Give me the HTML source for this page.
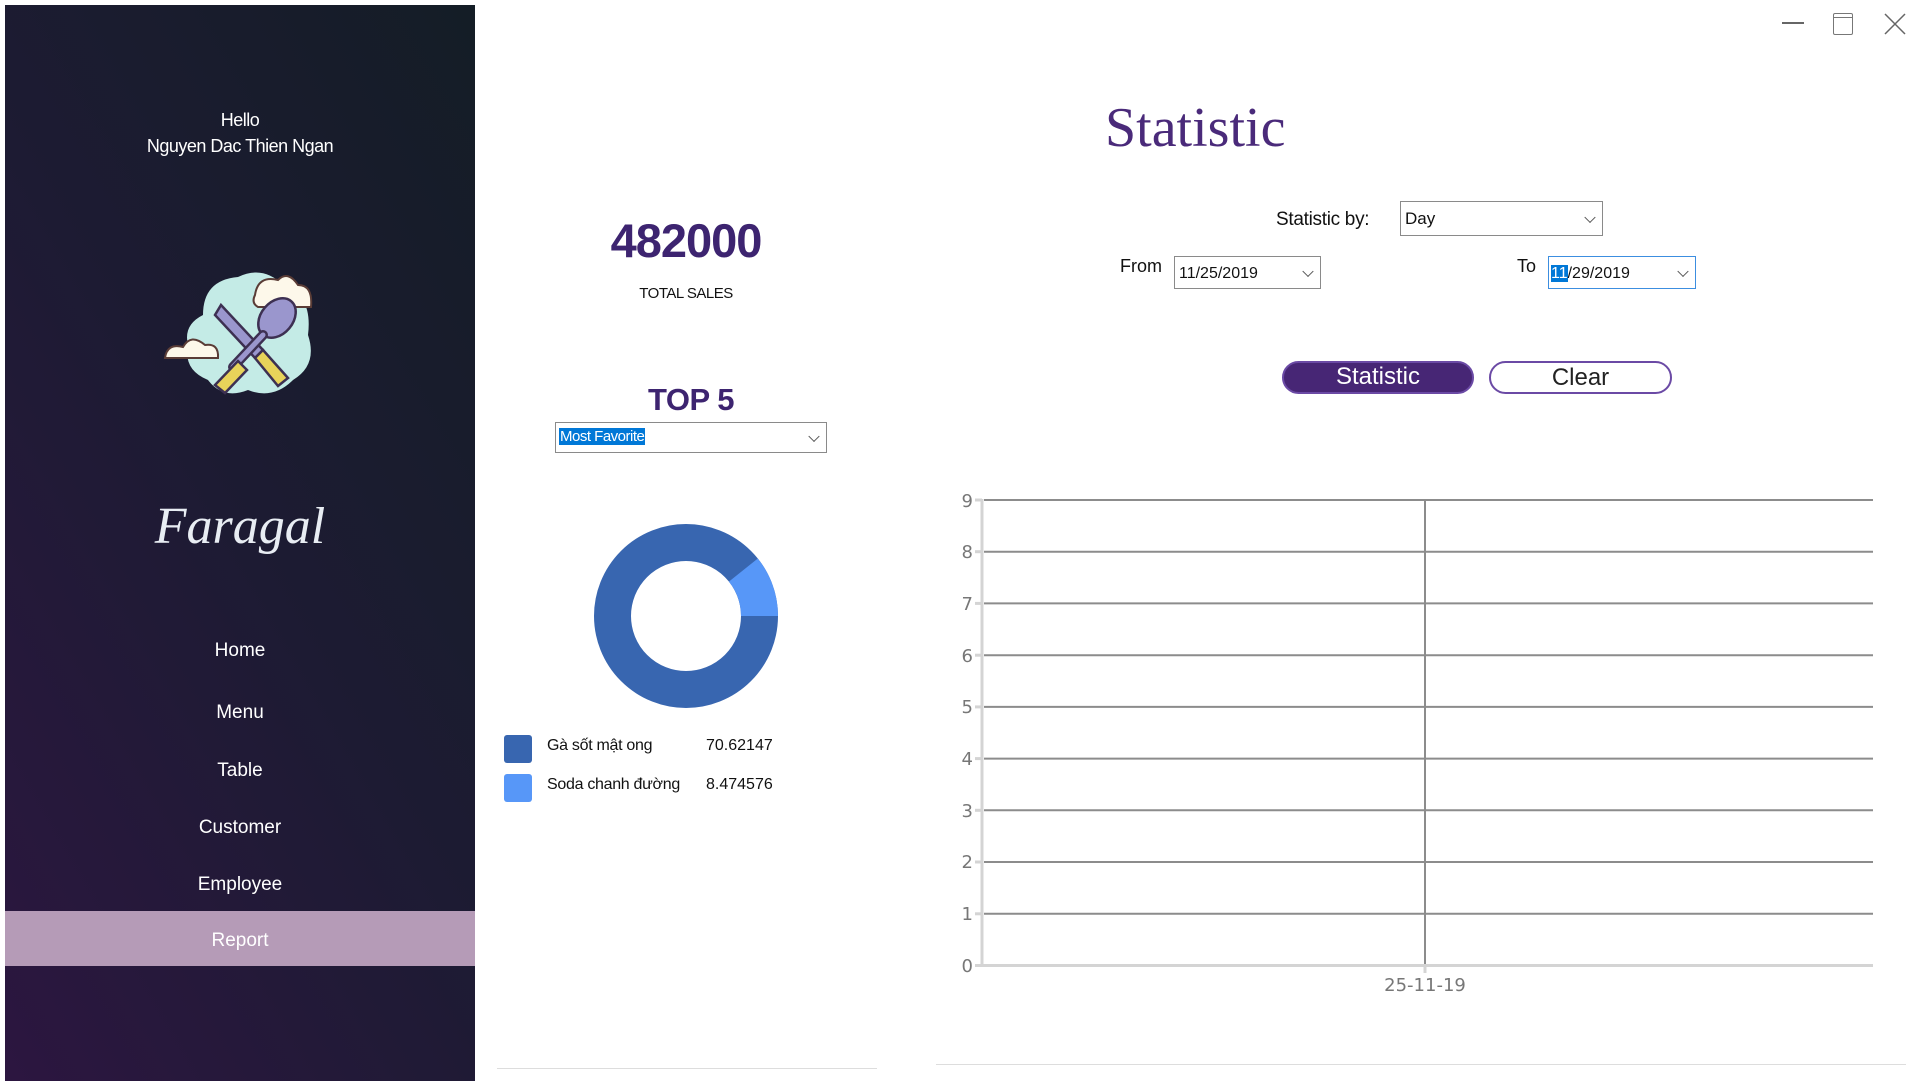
<!DOCTYPE html>
<html><head><meta charset="utf-8"><style>
*{margin:0;padding:0;box-sizing:border-box}
body{width:1920px;height:1080px;background:#fff;position:relative;overflow:hidden;font-family:"Liberation Sans","DejaVu Sans",sans-serif;color:#111}
.a{position:absolute}
#side{left:5px;top:5px;width:470px;height:1076px;background:linear-gradient(60deg,#2c1640 0%,#1d1b33 50%,#141d26 100%)}
.c{text-align:center;white-space:nowrap}
.menu{color:#fff;font-size:19px;width:470px;left:0}
.box{border:1px solid #8a8a8a;background:#fff;font-size:16px}
.arr{position:absolute;right:8px;top:50%;width:8px;height:8px;border-right:1.3px solid #555;border-bottom:1.3px solid #555;transform:translateY(-70%) rotate(45deg)}
</style></head><body>
<div id="side" class="a">
 <div class="a c menu" style="top:105px;font-size:18px;letter-spacing:-0.5px">Hello</div>
 <div class="a c menu" style="top:131px;font-size:18px;letter-spacing:-0.5px">Nguyen Dac Thien Ngan</div>
 <svg class="a" style="left:158px;top:250px" width="170" height="150" viewBox="0 0 170 150">
  <path d="M40 60 Q40 25 75 22 Q100 10 120 30 Q150 40 145 80 Q155 110 130 125 Q110 145 85 135 Q60 145 45 125 Q20 115 25 90 Q20 70 40 60Z" fill="#c4ebe6"/>
  <path d="M92 40 Q95 20 115 25 Q125 15 135 30 Q150 30 148 52 L95 52 Q88 48 92 40Z" fill="#fdf8ea" stroke="#5a3c36" stroke-width="2"/>
  <path d="M2 103 Q4 88 20 92 Q28 78 42 90 Q56 88 55 103 Z" fill="#fdf8ea" stroke="#5a3c36" stroke-width="2"/>
  <path d="M58 50 L100 95 L92 103 L52 60 Z" fill="#9a96cd" stroke="#3d3052" stroke-width="2.5"/>
  <path d="M92 103 L100 95 L125 123 L115 131Z" fill="#e8d35a" stroke="#3d3052" stroke-width="2.5"/>
  <ellipse cx="114" cy="63" rx="16" ry="22" transform="rotate(40 114 63)" fill="#9a96cd" stroke="#3d3052" stroke-width="2.5"/>
  <path d="M100 80 L70 112" stroke="#3d3052" stroke-width="10" stroke-linecap="round"/>
  <path d="M100 80 L70 112" stroke="#9a96cd" stroke-width="5" stroke-linecap="round"/>
  <path d="M75 106 L52 130 L62 138 L84 115Z" fill="#e8d35a" stroke="#3d3052" stroke-width="2.5"/>
 </svg>
 <div class="a c menu" style="top:492px;font-family:'Liberation Serif',serif;font-style:italic;font-size:52px;color:#e8edf3;letter-spacing:0px">Faragal</div>
 <div class="a c menu" style="top:635px">Home</div>
 <div class="a c menu" style="top:697px">Menu</div>
 <div class="a c menu" style="top:755px">Table</div>
 <div class="a c menu" style="top:812px">Customer</div>
 <div class="a c menu" style="top:869px">Employee</div>
 <div class="a" style="left:0;top:906px;width:470px;height:55px;background:#b59bb7"></div>
 <div class="a c menu" style="top:925px">Report</div>
</div>

<div class="a c" style="left:586px;width:200px;top:213px;font-size:47px;font-weight:bold;color:#3d2470;letter-spacing:-1px">482000</div>
<div class="a c" style="left:586px;width:200px;top:285px;font-size:15px;letter-spacing:-0.5px">TOTAL SALES</div>
<div class="a c" style="left:586px;width:210px;top:382px;font-size:31px;font-weight:bold;color:#3d2470;letter-spacing:-0.5px">TOP 5</div>
<div class="a box" style="left:555px;top:422px;width:272px;height:31px">
 <span class="a" style="left:3px;top:5px;background:#0078d7;color:#fff;padding:0 1px;font-size:15px;letter-spacing:-0.5px">Most Favorite</span><div class="arr"></div></div>

<svg class="a" style="left:586px;top:516px" width="200" height="200" viewBox="-100 -100 200 200">
 <circle r="73.5" fill="none" stroke="#3866b0" stroke-width="37"/>
 <path d="M92 0 A92 92 0 0 0 71.8 -57.5 L42.9 -34.4 A55 55 0 0 1 55 0Z" fill="#5797f8"/>
</svg>
<div class="a" style="left:504px;top:735px;width:28px;height:28px;background:#3866b0;border-radius:3px"></div>
<div class="a" style="left:504px;top:774px;width:28px;height:28px;background:#5797f8;border-radius:3px"></div>
<div class="a" style="left:547px;top:737px;font-size:16px;letter-spacing:-0.3px">Gà sốt mật ong</div>
<div class="a" style="left:547px;top:776px;font-size:16px;letter-spacing:-0.3px">Soda chanh đường</div>
<div class="a" style="left:706px;top:737px;font-size:16px">70.62147</div>
<div class="a" style="left:706px;top:776px;font-size:16px">8.474576</div>
<div class="a" style="left:497px;top:1068px;width:380px;height:1px;background:#ddd"></div>
<div class="a" style="left:936px;top:1064px;width:970px;height:1px;background:#ddd"></div>

<div class="a" style="left:1782px;top:22px;width:22px;height:2px;background:#666"></div>
<div class="a" style="left:1833px;top:13px;width:20px;height:22px;border:1.5px solid #777;border-radius:2px"><div style="margin-top:3px;border-top:1.5px solid #777"></div></div>
<svg class="a" style="left:1883px;top:12px" width="24" height="24"><path d="M2 2L22 22M22 2L2 22" stroke="#666" stroke-width="1.5"/></svg>

<div class="a" style="left:1105px;top:96px;font-family:'Liberation Serif',serif;font-size:56px;color:#4a2a7a">Statistic</div>
<div class="a" style="left:1276px;top:209px;font-size:19px;letter-spacing:-0.3px">Statistic by:</div>
<div class="a box" style="left:1400px;top:201px;width:203px;height:35px"><span class="a" style="left:4px;top:7px;font-size:17px">Day</span><div class="arr"></div></div>
<div class="a" style="left:1120px;top:256px;font-size:18px">From</div>
<div class="a box" style="left:1174px;top:256px;width:147px;height:33px"><span class="a" style="left:4px;top:8px;font-size:16px">11/25/2019</span><div class="arr"></div></div>
<div class="a" style="left:1517px;top:256px;font-size:18px">To</div>
<div class="a box" style="left:1548px;top:256px;width:148px;height:33px;border-color:#3c8ee0"><span class="a" style="left:2px;top:8px;font-size:16px"><span style="background:#0078d7;color:#fff">11</span>/29/2019</span><div class="arr"></div></div>
<div class="a c" style="left:1282px;top:361px;width:192px;height:33px;background:#472675;border:2px solid #6b4aa5;border-radius:17px;color:#fff;font-size:24px;line-height:28px">Statistic</div>
<div class="a c" style="left:1489px;top:361px;width:183px;height:33px;background:#fff;border:2px solid #6b4aa5;border-radius:17px;color:#222;font-size:24px;line-height:30px">Clear</div>

<svg class="a" style="left:0;top:0" width="1920" height="1080">
 <g stroke="#8c8c8c" stroke-width="2">
  <line x1="984" y1="500" x2="1873" y2="500"/><line x1="984" y1="551.7" x2="1873" y2="551.7"/>
  <line x1="984" y1="603.4" x2="1873" y2="603.4"/><line x1="984" y1="655.2" x2="1873" y2="655.2"/>
  <line x1="984" y1="706.9" x2="1873" y2="706.9"/><line x1="984" y1="758.6" x2="1873" y2="758.6"/>
  <line x1="984" y1="810.3" x2="1873" y2="810.3"/><line x1="984" y1="862" x2="1873" y2="862"/>
  <line x1="984" y1="913.8" x2="1873" y2="913.8"/>
  <line x1="1425" y1="500" x2="1425" y2="965"/>
 </g>
 <g stroke="#d4d4d4" stroke-width="3"><line x1="982" y1="499" x2="982" y2="966"/><line x1="982" y1="965.5" x2="1873" y2="965.5"/>
 <line x1="975" y1="500" x2="982" y2="500"/><line x1="975" y1="551.7" x2="982" y2="551.7"/><line x1="975" y1="603.4" x2="982" y2="603.4"/><line x1="975" y1="655.2" x2="982" y2="655.2"/><line x1="975" y1="706.9" x2="982" y2="706.9"/><line x1="975" y1="758.6" x2="982" y2="758.6"/><line x1="975" y1="810.3" x2="982" y2="810.3"/><line x1="975" y1="862" x2="982" y2="862"/><line x1="975" y1="913.8" x2="982" y2="913.8"/><line x1="975" y1="965.5" x2="982" y2="965.5"/><line x1="1425" y1="966" x2="1425" y2="973"/></g>
 <g fill="#777" font-family="DejaVu Sans,sans-serif" font-size="18" text-anchor="end">
  <text x="973" y="507">9</text><text x="973" y="558">8</text><text x="973" y="610">7</text><text x="973" y="662">6</text><text x="973" y="713">5</text><text x="973" y="765">4</text><text x="973" y="817">3</text><text x="973" y="868">2</text><text x="973" y="920">1</text><text x="973" y="972">0</text>
  <text x="1425" y="991" text-anchor="middle">25-11-19</text>
 </g>
</svg>
</body></html>
